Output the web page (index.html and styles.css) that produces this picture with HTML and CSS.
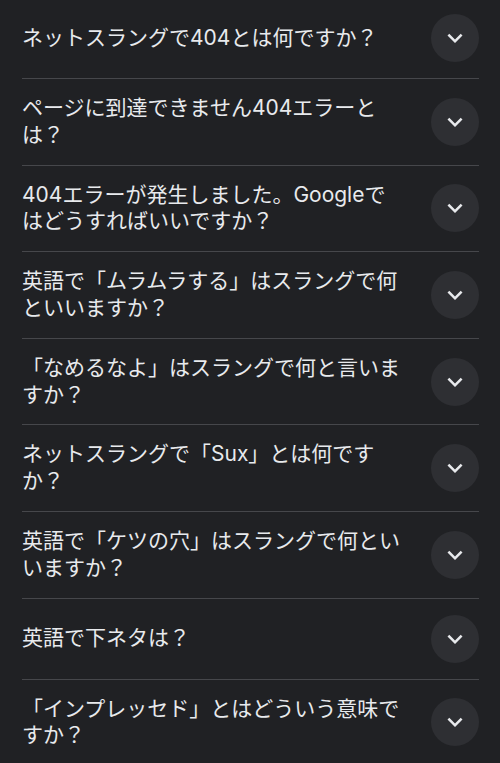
FILE: index.html
```html
<!DOCTYPE html>
<html lang="ja">
<head>
<meta charset="utf-8">
<title>関連する質問</title>
<link rel="stylesheet" href="styles.css">
</head>
<body>
<div class="list">
  <div class="row"><div class="q">ネットスラングで404とは何ですか？</div><div class="btn"><svg viewBox="0 0 24 24"><path d="M7.41 8.59 12 13.17l4.59-4.58L18 10l-6 6-6-6z"/></svg></div></div>
  <div class="row"><div class="q">ページに到達できません404エラーとは？</div><div class="btn"><svg viewBox="0 0 24 24"><path d="M7.41 8.59 12 13.17l4.59-4.58L18 10l-6 6-6-6z"/></svg></div></div>
  <div class="row"><div class="q">404エラーが発生しました。Googleではどうすればいいですか？</div><div class="btn"><svg viewBox="0 0 24 24"><path d="M7.41 8.59 12 13.17l4.59-4.58L18 10l-6 6-6-6z"/></svg></div></div>
  <div class="row"><div class="q">英語で「ムラムラする」はスラングで何といいますか？</div><div class="btn"><svg viewBox="0 0 24 24"><path d="M7.41 8.59 12 13.17l4.59-4.58L18 10l-6 6-6-6z"/></svg></div></div>
  <div class="row"><div class="q">「なめるなよ」はスラングで何と言いますか？</div><div class="btn"><svg viewBox="0 0 24 24"><path d="M7.41 8.59 12 13.17l4.59-4.58L18 10l-6 6-6-6z"/></svg></div></div>
  <div class="row"><div class="q">ネットスラングで「Sux」とは何ですか？</div><div class="btn"><svg viewBox="0 0 24 24"><path d="M7.41 8.59 12 13.17l4.59-4.58L18 10l-6 6-6-6z"/></svg></div></div>
  <div class="row"><div class="q">英語で「ケツの穴」はスラングで何といいますか？</div><div class="btn"><svg viewBox="0 0 24 24"><path d="M7.41 8.59 12 13.17l4.59-4.58L18 10l-6 6-6-6z"/></svg></div></div>
  <div class="row"><div class="q">英語で下ネタは？</div><div class="btn"><svg viewBox="0 0 24 24"><path d="M7.41 8.59 12 13.17l4.59-4.58L18 10l-6 6-6-6z"/></svg></div></div>
  <div class="row"><div class="q">「インプレッセド」とはどういう意味ですか？</div><div class="btn"><svg viewBox="0 0 24 24"><path d="M7.41 8.59 12 13.17l4.59-4.58L18 10l-6 6-6-6z"/></svg></div></div>
</div>
</body>
</html>
```
FILE: styles.css
```css
html, body {
  margin: 0;
  padding: 0;
  background: #202124;
}
body {
  font-family: Inter, "Noto Sans CJK JP", "Noto Sans", sans-serif;
  color: #e8eaed;
  overflow: hidden;
}
.list {
  margin-top: -2px;
  padding: 0 21px 0 22px;
}
.row {
  display: flex;
  align-items: center;
  padding: 16px 0;
  border-bottom: 1px solid #46474b;
}
.q {
  flex: 1;
  max-width: 383px;
  font-size: 21px;
  line-height: 26.8px;
  padding-right: 8px;
}
.btn {
  margin-left: auto;
  flex: none;
  width: 48px;
  height: 48px;
  border-radius: 50%;
  background: #2e2f33;
  display: flex;
  align-items: center;
  justify-content: center;
}
.btn svg {
  width: 30px;
  height: 30px;
  fill: #e8eaed;
}
```
